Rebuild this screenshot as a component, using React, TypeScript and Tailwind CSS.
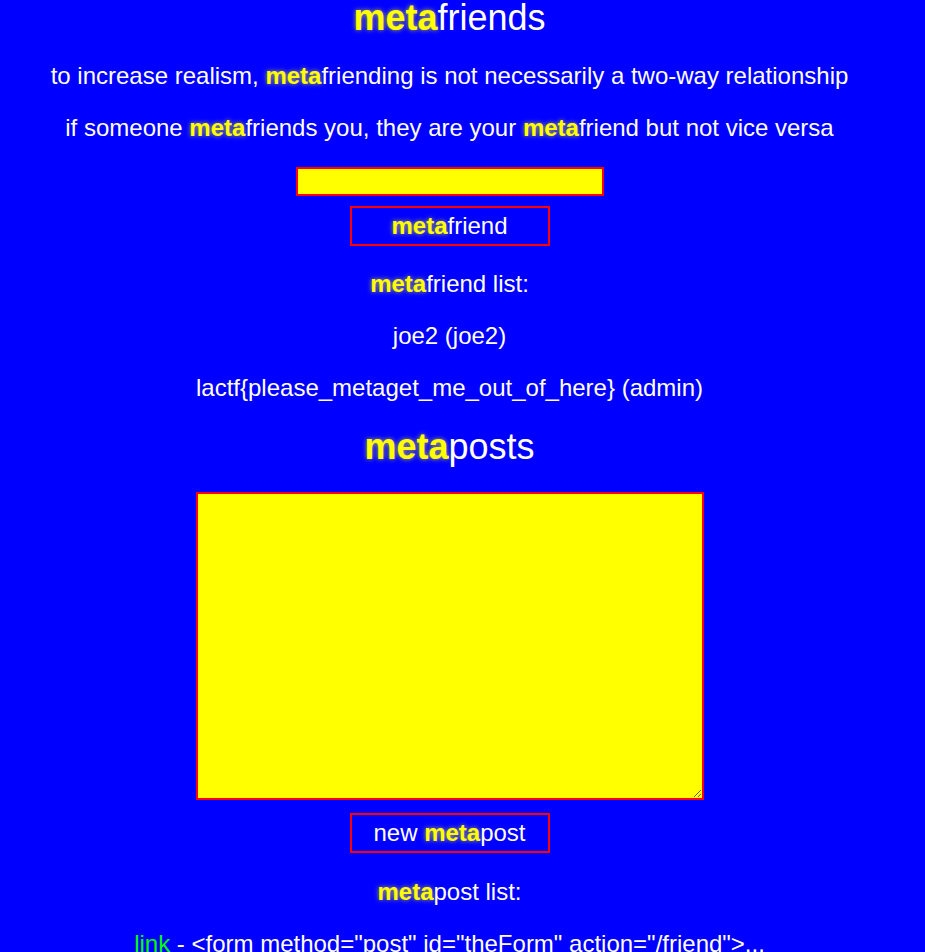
const glow = "font-bold text-[#ffff00] [text-shadow:0_0_5px_rgba(255,255,0,0.7)]";

function Meta() {
  return <span className={glow}>meta</span>;
}

export default function App() {
  return (
    <div className="min-h-screen bg-[#0000ff] text-white text-[24px] font-['Liberation_Sans',Arial,sans-serif]">
      <div className="w-[899px] flex flex-col items-center text-center">
        <h1 className="text-[36px] leading-[41px] -mt-[3px]">
          <Meta />friends
        </h1>
        <p className="mt-6 leading-[28px]">
          to increase realism, <Meta />friending is not necessarily a two-way relationship
        </p>
        <p className="mt-6 leading-[28px]">
          if someone <Meta />friends you, they are your <Meta />friend but not vice versa
        </p>
        <input
          type="text"
          className="mt-[25px] w-[308px] h-[29px] bg-[#ffff00] border-2 border-[#ff0000] outline-none"
        />
        <button className="mt-[10px] w-[200px] h-[40px] border-2 border-[#ff0000] leading-[28px]">
          <Meta />friend
        </button>
        <p className="mt-6 leading-[28px]">
          <Meta />friend list:
        </p>
        <p className="mt-6 leading-[28px]">joe2 (joe2)</p>
        <p className="mt-6 leading-[28px]">lactf{"{"}please_metaget_me_out_of_here{"}"} (admin)</p>
        <h2 className="mt-6 text-[36px] leading-[41px]">
          <Meta />posts
        </h2>
        <textarea className="mt-[25px] w-[508px] h-[308px] bg-[#ffff00] border-2 border-[#ff0000] outline-none" />
        <button className="mt-[13px] w-[200px] h-[40px] border-2 border-[#ff0000] leading-[28px]">
          new <Meta />post
        </button>
        <p className="mt-[25px] leading-[28px]">
          <Meta />post list:
        </p>
        <p className="mt-6 leading-[28px] mb-6">
          <span className="text-[#00ff00]">link</span> - &lt;form method="post" id="theForm" action="/friend"&gt;...
        </p>
      </div>
    </div>
  );
}
